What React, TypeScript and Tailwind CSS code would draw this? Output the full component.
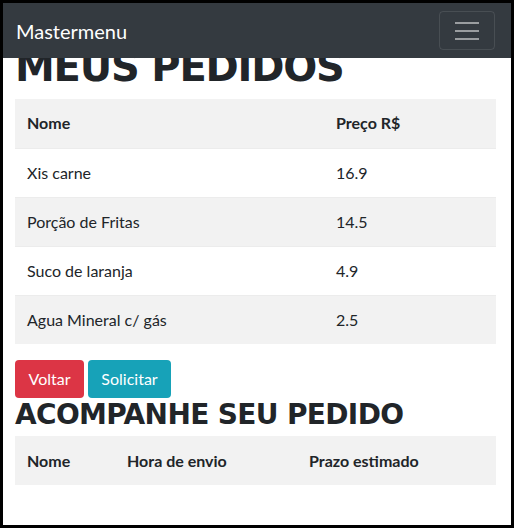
import React from 'react';

type Pedido = { nome: string; preco: string };

const pedidos: Pedido[] = [
  { nome: 'Xis carne', preco: '16.9' },
  { nome: 'Porção de Fritas', preco: '14.5' },
  { nome: 'Suco de laranja', preco: '4.9' },
  { nome: 'Agua Mineral c/ gás', preco: '2.5' },
];

const Navbar: React.FC = () => (
  <nav className="absolute inset-x-0 top-0 z-10 flex h-[55px] items-center justify-between bg-[#343a40] pl-[13px] pr-[16px]">
    <span className="text-[20px] leading-[30px] text-white">Mastermenu</span>
    <button className="flex h-[39px] w-[56px] flex-col items-center justify-center gap-[6px] rounded-[4px] border border-white/10">
      <span className="block h-[2px] w-[24px] bg-white/50" />
      <span className="block h-[2px] w-[24px] bg-white/50" />
      <span className="block h-[2px] w-[24px] bg-white/50" />
    </button>
  </nav>
);

export default function App() {
  return (
    <div className="h-[528px] w-[514px] bg-black pl-[3px] pt-[3px]">
      <div className="relative h-[522px] w-[508px] overflow-hidden bg-white font-['Lato',sans-serif] text-[16px] text-[#212529]">
        <Navbar />
        <main className="pl-[12px] pr-[15px] pt-[40px]">
          <h1 className="mb-[8px] font-['DejaVu_Sans',sans-serif] text-[40px] font-bold leading-[48px] tracking-[-1.2px]">
            MEUS PEDIDOS
          </h1>
          <table className="mb-[16px] w-full border-collapse">
            <thead>
              <tr className="bg-[#f2f2f2]">
                <th className="h-[49px] w-[309px] px-[12px] text-left font-bold">Nome</th>
                <th className="h-[49px] px-[12px] text-left font-bold">Preço R$</th>
              </tr>
            </thead>
            <tbody>
              {pedidos.map((p, i) => (
                <tr key={p.nome} className={i % 2 === 1 ? 'bg-[#f2f2f2]' : 'bg-white'}>
                  <td className="h-[49px] border-t border-[#ececec] px-[12px]">{p.nome}</td>
                  <td className="h-[49px] border-t border-[#ececec] px-[12px]">{p.preco}</td>
                </tr>
              ))}
            </tbody>
          </table>
          <div className="flex gap-[4px]">
            <button className="h-[38px] w-[69px] rounded-[4px] bg-[#dc3545] leading-[24px] text-white">Voltar</button>
            <button className="h-[38px] w-[83px] rounded-[4px] bg-[#17a2b8] leading-[24px] text-white">Solicitar</button>
          </div>
          <h3 className="mb-[4px] font-['DejaVu_Sans',sans-serif] text-[28px] font-bold leading-[34px] tracking-[-0.65px]">
            ACOMPANHE SEU PEDIDO
          </h3>
          <table className="w-full border-collapse">
            <thead>
              <tr className="bg-[#f2f2f2]">
                <th className="h-[49px] w-[100px] px-[12px] text-left font-bold">Nome</th>
                <th className="h-[49px] w-[182px] px-[12px] text-left font-bold">Hora de envio</th>
                <th className="h-[49px] px-[12px] text-left font-bold">Prazo estimado</th>
              </tr>
            </thead>
          </table>
        </main>
      </div>
    </div>
  );
}
